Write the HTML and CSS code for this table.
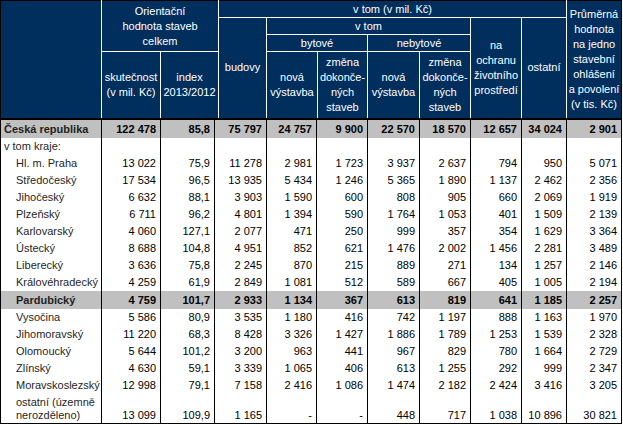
FILE: index.html
```html
<!DOCTYPE html>
<html lang="cs">
<head>
<meta charset="utf-8">
<title>Orientační hodnota staveb</title>
<link rel="stylesheet" href="styles.css">
</head>
<body>
<div class="sheet">
<table class="head">
  <colgroup>
    <col class="c1"><col class="h2"><col class="h3"><col class="h4"><col class="h5"><col class="h6"><col class="h7"><col class="h8"><col class="h9"><col class="h10"><col class="h11">
  </colgroup>
  <tr class="r1">
    <th rowspan="4" class="blank"></th>
    <th colspan="2" rowspan="3">Orientační<br>hodnota staveb<br>celkem</th>
    <th colspan="7">v tom (v mil. Kč)</th>
    <th rowspan="4">Průměrná<br>hodnota<br>na jedno<br>stavební<br>ohlášení<br>a povolení<br>(v tis. Kč)</th>
  </tr>
  <tr class="r2">
    <th rowspan="3">budovy</th>
    <th colspan="4">v tom</th>
    <th rowspan="3">na<br>ochranu<br>životního<br>prostředí</th>
    <th rowspan="3">ostatní</th>
  </tr>
  <tr class="r3">
    <th colspan="2">bytové</th>
    <th colspan="2">nebytové</th>
  </tr>
  <tr class="r4">
    <th>skutečnost<br>(v mil. Kč)</th>
    <th>index<br>2013/2012</th>
    <th>nová<br>výstavba</th>
    <th>změna<br>dokonče-<br>ných<br>staveb</th>
    <th>nová<br>výstavba</th>
    <th>změna<br>dokonče-<br>ných<br>staveb</th>
  </tr>
</table>
<table class="body">
  <colgroup>
    <col class="c1"><col class="b2"><col class="b3"><col class="b4"><col class="b5"><col class="b6"><col class="b7"><col class="b8"><col class="b9"><col class="b10"><col class="b11">
  </colgroup>
  <tr class="total"><td class="name">Česká republika</td><td>122 478</td><td>85,8</td><td>75 797</td><td>24 757</td><td>9 900</td><td>22 570</td><td>18 570</td><td>12 657</td><td>34 024</td><td>2 901</td></tr>
  <tr><td class="name">v tom kraje:</td><td></td><td></td><td></td><td></td><td></td><td></td><td></td><td></td><td></td><td></td></tr>
  <tr><td class="name sub">Hl. m. Praha</td><td>13 022</td><td>75,9</td><td>11 278</td><td>2 981</td><td>1 723</td><td>3 937</td><td>2 637</td><td>794</td><td>950</td><td>5 071</td></tr>
  <tr><td class="name sub">Středočeský</td><td>17 534</td><td>96,5</td><td>13 935</td><td>5 434</td><td>1 246</td><td>5 365</td><td>1 890</td><td>1 137</td><td>2 462</td><td>2 356</td></tr>
  <tr><td class="name sub">Jihočeský</td><td>6 632</td><td>88,1</td><td>3 903</td><td>1 590</td><td>600</td><td>808</td><td>905</td><td>660</td><td>2 069</td><td>1 919</td></tr>
  <tr><td class="name sub">Plzeňský</td><td>6 711</td><td>96,2</td><td>4 801</td><td>1 394</td><td>590</td><td>1 764</td><td>1 053</td><td>401</td><td>1 509</td><td>2 139</td></tr>
  <tr><td class="name sub">Karlovarský</td><td>4 060</td><td>127,1</td><td>2 077</td><td>471</td><td>250</td><td>999</td><td>357</td><td>354</td><td>1 629</td><td>3 364</td></tr>
  <tr><td class="name sub">Ústecký</td><td>8 688</td><td>104,8</td><td>4 951</td><td>852</td><td>621</td><td>1 476</td><td>2 002</td><td>1 456</td><td>2 281</td><td>3 489</td></tr>
  <tr><td class="name sub">Liberecký</td><td>3 636</td><td>75,8</td><td>2 245</td><td>870</td><td>215</td><td>889</td><td>271</td><td>134</td><td>1 257</td><td>2 146</td></tr>
  <tr><td class="name sub">Královéhradecký</td><td>4 259</td><td>61,9</td><td>2 849</td><td>1 081</td><td>512</td><td>589</td><td>667</td><td>405</td><td>1 005</td><td>2 194</td></tr>
  <tr class="total"><td class="name sub">Pardubický</td><td>4 759</td><td>101,7</td><td>2 933</td><td>1 134</td><td>367</td><td>613</td><td>819</td><td>641</td><td>1 185</td><td>2 257</td></tr>
  <tr><td class="name sub">Vysočina</td><td>5 586</td><td>80,9</td><td>3 535</td><td>1 180</td><td>416</td><td>742</td><td>1 197</td><td>888</td><td>1 163</td><td>1 970</td></tr>
  <tr><td class="name sub">Jihomoravský</td><td>11 220</td><td>68,3</td><td>8 428</td><td>3 326</td><td>1 427</td><td>1 886</td><td>1 789</td><td>1 253</td><td>1 539</td><td>2 328</td></tr>
  <tr><td class="name sub">Olomoucký</td><td>5 644</td><td>101,2</td><td>3 200</td><td>963</td><td>441</td><td>967</td><td>829</td><td>780</td><td>1 664</td><td>2 729</td></tr>
  <tr><td class="name sub">Zlínský</td><td>4 630</td><td>59,1</td><td>3 339</td><td>1 065</td><td>406</td><td>613</td><td>1 255</td><td>292</td><td>999</td><td>2 347</td></tr>
  <tr><td class="name sub">Moravskoslezský</td><td>12 998</td><td>79,1</td><td>7 158</td><td>2 416</td><td>1 086</td><td>1 474</td><td>2 182</td><td>2 424</td><td>3 416</td><td>3 205</td></tr>
  <tr class="last"><td class="name sub">ostatní (územně nerozděleno)</td><td>13 099</td><td>109,9</td><td>1 165</td><td>-</td><td>-</td><td>448</td><td>717</td><td>1 038</td><td>10 896</td><td>30 821</td></tr>
</table>
</div>
</body>
</html>
```
FILE: styles.css
```css
html, body {
  margin: 0;
  padding: 0;
  background: #ffffff;
}

.sheet {
  width: 622px;
  font-family: "Liberation Sans", Arial, sans-serif;
  font-size: 11px;
}

table {
  border-collapse: collapse;
  table-layout: fixed;
  width: 621px;
}

.c1 { width: 101px; }

/* header column widths */
.h2 { width: 59px; }
.h3 { width: 58px; }
.h4 { width: 48px; }
.h5 { width: 51px; }
.h6 { width: 50px; }
.h7 { width: 52px; }
.h8 { width: 51px; }
.h9 { width: 51px; }
.h10 { width: 45px; }
.h11 { width: 55px; }

/* body column widths */
.b2 { width: 59px; }
.b3 { width: 54px; }
.b4 { width: 52px; }
.b5 { width: 50px; }
.b6 { width: 51px; }
.b7 { width: 52px; }
.b8 { width: 51px; }
.b9 { width: 51px; }
.b10 { width: 45px; }
.b11 { width: 55px; }

.head {
  background: #002f5e;
  border: 1px solid #000;
  border-bottom: 2px solid #000;
}

.head th {
  color: #ffffff;
  font-weight: normal;
  line-height: 15px;
  padding: 0;
  border: 1px solid #ffffff;
  text-align: center;
  vertical-align: middle;
  overflow: hidden;
}

.head th.blank {
  border-left-color: #000;
}

.head tr:first-child th {
  border-top-color: #000;
}

.head th:last-child {
  border-right-color: #000;
}

.head .r4 th {
  border-bottom: 2px solid #000;
}

.head th.blank,
.head .r1 th:last-child {
  border-bottom: 2px solid #000;
}

.head .r1 { height: 17px; }
.head .r2 { height: 17px; }
.head .r3 { height: 17px; }
.head .r4 { height: 67px; }

.body {
  border: 1px solid #000;
  border-top: none;
}

.body td {
  color: #000;
  line-height: 13px;
  height: 13px;
  padding: 2px 4px 2px 3px;
  text-align: right;
  vertical-align: bottom;
  white-space: nowrap;
  border-left: 1px solid #000;
  border-right: 1px solid #000;
}

.body td.name {
  text-align: left;
  color: #1f1f1f;
  white-space: normal;
}

.body td.sub {
  padding-left: 15px;
}

.body tr.total td {
  background: #c0c0c0;
  font-weight: bold;
  height: 14px;
}

.body tr.last td {
  padding-bottom: 1px;
}
```
